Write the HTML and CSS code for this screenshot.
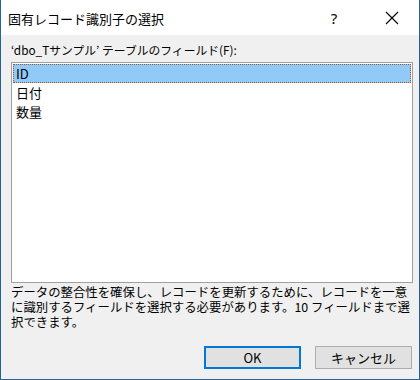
FILE: index.html
```html
<!DOCTYPE html>
<html>
<head>
<meta charset="utf-8">
<meta name="viewport" content="width=device-width, initial-scale=1.0"/>
<link rel="stylesheet" href="styles.css">
</head>
<body>

<div class="dialogo">

    <div class="barraTitulo">
        <span class="titulo">固有レコード識別子の選択</span>
        <span class="btnAyuda">?</span>
        <span class="btnCerrar">
            <svg width="14" height="14" viewBox="0 0 14 14">
                <path d="M1 1 L13 13 M13 1 L1 13" stroke="#000" stroke-width="1.1" fill="none"/>
            </svg>
        </span>
    </div>

    <div class="cuerpo">
        <div class="etiqueta">‘dbo_Tサンプル’ テーブルのフィールド(F):</div>

        <div class="lista">
            <div class="fila seleccionada">ID</div>
            <div class="fila">日付</div>
            <div class="fila">数量</div>
        </div>

        <p class="descripcion">データの整合性を確保し、レコードを更新するために、レコードを一意<br>に識別するフィールドを選択する必要があります。10 フィールドまで選<br>択できます。</p>

        <div class="botones">
            <div class="boton principal">OK</div>
            <div class="boton">キャンセル</div>
        </div>
    </div>

</div>

</body>
</html>
```

FILE: styles.css
```css
body {
    margin: 0;
    background: #ffffff;
    font-family: "Noto Sans CJK JP", "Noto Sans", sans-serif;
    color: #000000;
}

.dialogo {
    width: 420px;
    height: 380px;
    box-sizing: border-box;
    border: 1px solid #24649a;
    border-top: none;
    display: flex;
    flex-direction: column;
    background: #f0f0f0;
}

.barraTitulo {
    height: 35px;
    background: #ffffff;
    display: flex;
    align-items: center;
    padding-left: 7px;
    flex-shrink: 0;
}

.titulo {
    font-size: 13px;
    flex: 1;
    padding-top: 1px;
}

.btnAyuda {
    font-family: "Noto Sans", sans-serif;
    font-size: 15px;
    width: 20px;
    text-align: center;
    margin-right: 41px;
}

.btnCerrar {
    display: flex;
    margin-right: 20px;
}

.cuerpo {
    flex: 1;
    display: flex;
    flex-direction: column;
    padding: 7px 6px 10px 10px;
}

.etiqueta {
    font-size: 11.8px;
    line-height: 15px;
    height: 20px;
    white-space: nowrap;
}

.lista {
    height: 221px;
    box-sizing: border-box;
    border: 1px solid #a0a0a0;
    background: #ffffff;
    padding: 1px;
}

.fila {
    height: 19px;
    line-height: 19px;
    font-size: 13px;
    padding-left: 3px;
    box-sizing: border-box;
}

.fila.seleccionada {
    background: #91c9f7;
    outline: 1px dotted #a0522d;
    outline-offset: -1px;
}

.descripcion {
    margin: 2px 0 0 0;
    font-size: 12.4px;
    line-height: 15px;
    height: 45px;
    white-space: nowrap;
}

.botones {
    margin-top: auto;
    display: flex;
    justify-content: flex-end;
    gap: 14px;
    padding-right: 1px;
}

.boton {
    width: 97px;
    height: 23px;
    box-sizing: border-box;
    border: 1px solid #adadad;
    background: #e1e1e1;
    font-size: 13px;
    display: flex;
    align-items: center;
    justify-content: center;
}

.boton.principal {
    border: 2px solid #0078d7;
}
```
